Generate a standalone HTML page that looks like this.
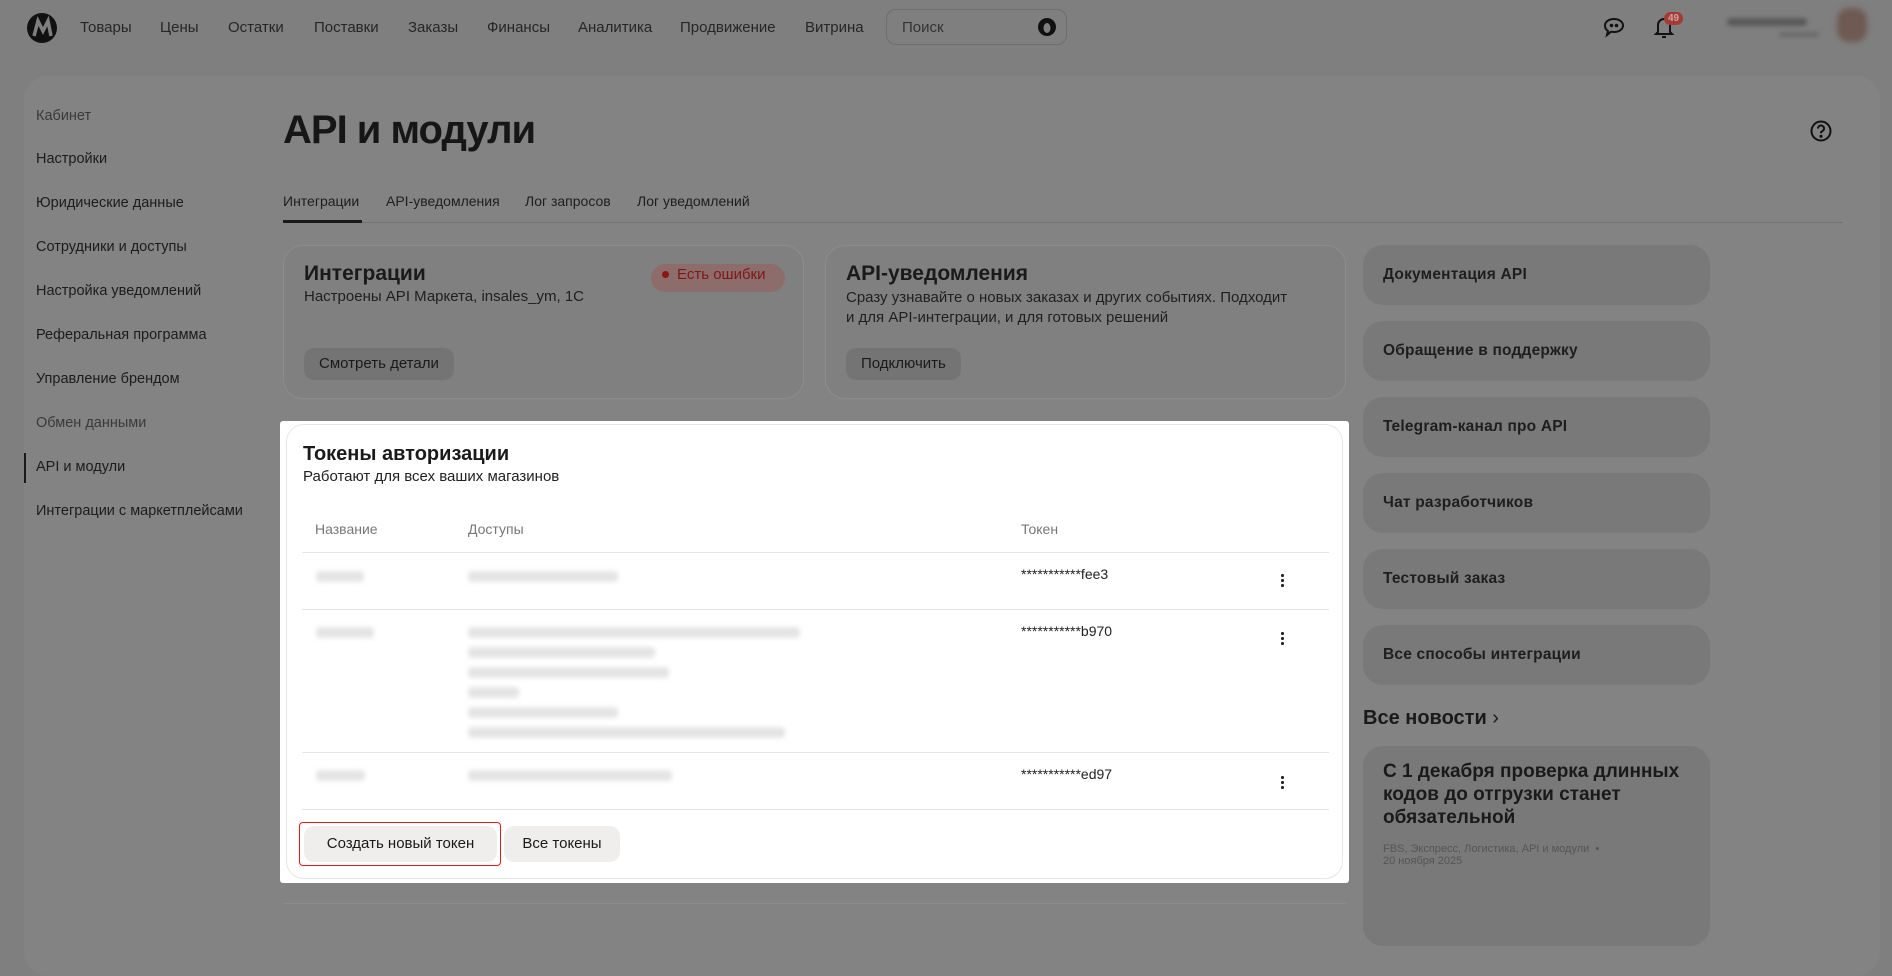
<!DOCTYPE html>
<html><head><meta charset="utf-8"><style>
*{box-sizing:border-box;margin:0;padding:0}
body{width:1892px;height:906px;overflow:hidden;background:#7f7f7f;font-family:"Liberation Sans",sans-serif;color:#1a1a1a;position:relative}
.a{position:absolute;white-space:nowrap}
.nav{font-size:15px;color:#262626;top:19px}
.side{font-size:14.5px;color:#1c1c1c;left:36px}
.card{position:absolute;border:1px solid #8c8c8c;border-radius:20px;background:#808080}
.btn{position:absolute;background:#747474;border-radius:10px;font-size:15px;color:#1a1a1a;padding:0 15px;line-height:32px}
.link{position:absolute;left:1363px;width:347px;height:60px;background:#797979;border-radius:20px;font-weight:bold;font-size:15.5px;color:#1e1e1e;padding-left:20px;line-height:60px;letter-spacing:.2px}
.tok{position:absolute;left:280px;top:421px;width:1069px;height:462px;background:#fff;border-radius:3px}
.tin{position:absolute;left:6px;top:3px;right:6px;bottom:4px;border:1px solid #e6e6e6;border-radius:18px}
.hl{position:absolute;left:22px;right:20px;height:1px;background:#e5e5e5}
.blur{position:absolute;height:11px;background:#e4e4e4;border-radius:4px;filter:blur(2.5px)}
.dots{position:absolute;left:1001px;width:3px}
.dots i{display:block;width:2.5px;height:2.5px;background:#222;border-radius:50%;margin-bottom:2.5px}
</style></head><body>
<svg class="a" style="left:26px;top:12px" width="32" height="32" viewBox="0 0 32 32"><circle cx="16" cy="16" r="15" fill="#111"/><path d="M8 24 L12 9 L17 19 L22 9 L25 24" stroke="#7f7f7f" stroke-width="3.5" fill="none"/></svg>
<div class="a nav" style="left:80px">Товары</div>
<div class="a nav" style="left:160px">Цены</div>
<div class="a nav" style="left:228px">Остатки</div>
<div class="a nav" style="left:314px">Поставки</div>
<div class="a nav" style="left:408px">Заказы</div>
<div class="a nav" style="left:487px">Финансы</div>
<div class="a nav" style="left:578px">Аналитика</div>
<div class="a nav" style="left:680px">Продвижение</div>
<div class="a nav" style="left:805px">Витрина</div>
<div class="a" style="left:886px;top:9px;width:181px;height:36px;border:1px solid #6e6e6e;border-radius:10px"></div>
<div class="a nav" style="left:902px;color:#333">Поиск</div>
<svg class="a" style="left:1037px;top:17px" width="20" height="20" viewBox="0 0 20 20"><circle cx="10" cy="10" r="9" fill="#111"/><ellipse cx="10" cy="11" rx="3.5" ry="5" fill="#7f7f7f"/></svg>
<svg class="a" style="left:1602px;top:15px" width="24" height="24" viewBox="0 0 24 24" fill="none" stroke="#111" stroke-width="2"><path d="M12 4c5 0 9 2.8 9 6.5S17 17 12 17c-1 0-2 0-3-.3L5 20l1-4C4 14.8 3 12.8 3 10.5 3 6.8 7 4 12 4z"/><circle cx="9.5" cy="10.5" r=".8" fill="#111"/><circle cx="14.5" cy="10.5" r=".8" fill="#111"/></svg>
<svg class="a" style="left:1652px;top:14px" width="24" height="26" viewBox="0 0 24 26" fill="none" stroke="#111" stroke-width="2"><path d="M6 18V11a6 6 0 0 1 12 0v7l2 2H4z"/><path d="M10 23h4"/></svg>
<div class="a" style="left:1664px;top:12px;background:#a33a35;color:#cfa6a4;font-size:10px;font-weight:bold;border-radius:8px;padding:1px 4px">49</div>
<div class="a" style="left:1727px;top:18px;width:80px;height:8px;background:#5a5a5a;border-radius:4px;filter:blur(2px)"></div>
<div class="a" style="left:1779px;top:32px;width:40px;height:5px;background:#6a6a6a;border-radius:4px;filter:blur(2px)"></div>
<div class="a" style="left:1837px;top:8px;width:30px;height:34px;background:#6e5a52;border-radius:12px;filter:blur(3px)"></div>

<div class="a" style="left:24px;top:76px;width:1856px;height:900px;background:#838383;border-radius:24px"></div>
<div class="a side" style="top:108px;color:#3a3a3a">Кабинет</div>
<div class="a side" style="top:151px">Настройки</div>
<div class="a side" style="top:195px">Юридические данные</div>
<div class="a side" style="top:239px">Сотрудники и доступы</div>
<div class="a side" style="top:283px">Настройка уведомлений</div>
<div class="a side" style="top:327px">Реферальная программа</div>
<div class="a side" style="top:371px">Управление брендом</div>
<div class="a side" style="top:415px;color:#3a3a3a">Обмен данными</div>
<div class="a" style="left:24px;top:453px;width:2px;height:30px;background:#1a1a1a"></div>
<div class="a side" style="top:459px">API и модули</div>
<div class="a side" style="top:503px">Интеграции с маркетплейсами</div>

<div class="a" style="left:283px;top:108px;font-size:40px;font-weight:bold;color:#161616;letter-spacing:-1px">API и модули</div>
<svg class="a" style="left:1810px;top:120px" width="22" height="22" viewBox="0 0 22 22" fill="none" stroke="#111" stroke-width="2"><circle cx="11" cy="11" r="9.5"/><path d="M8 8.5a3 3 0 1 1 4 2.8c-.8.4-1 1-1 2"/><circle cx="11" cy="16.3" r=".6" fill="#111"/></svg>

<div class="a" style="left:283px;top:193px;font-size:14px;color:#1e1e1e">Интеграции</div>
<div class="a" style="left:386px;top:193px;font-size:14px;color:#1e1e1e">API-уведомления</div>
<div class="a" style="left:525px;top:193px;font-size:14px;color:#1e1e1e">Лог запросов</div>
<div class="a" style="left:637px;top:193px;font-size:14px;color:#1e1e1e">Лог уведомлений</div>
<div class="a" style="left:283px;top:222px;width:1560px;height:1px;background:#737373"></div>
<div class="a" style="left:283px;top:220px;width:79px;height:3px;background:#1a1a1a"></div>

<div class="card" style="left:283px;top:245px;width:521px;height:154px"></div>
<div class="a" style="left:304px;top:262px;font-size:21px;font-weight:bold;color:#1a1a1a">Интеграции</div>
<div class="a" style="left:304px;top:288px;font-size:15px;color:#1f1f1f">Настроены API Маркета, insales_ym, 1C</div>
<div class="a" style="left:651px;top:264px;width:134px;height:28px;background:#8c6d6c;border-radius:14px"></div>
<div class="a" style="left:662px;top:271px;width:7px;height:7px;background:#8e1414;border-radius:50%"></div>
<div class="a" style="left:677px;top:266px;font-size:15px;color:#7f1717">Есть ошибки</div>
<div class="btn" style="left:304px;top:348px">Смотреть детали</div>

<div class="card" style="left:825px;top:245px;width:521px;height:154px"></div>
<div class="a" style="left:846px;top:262px;font-size:21px;font-weight:bold;color:#1a1a1a">API-уведомления</div>
<div class="a" style="left:846px;top:288px;font-size:15px;color:#1f1f1f;line-height:20px">Сразу узнавайте о новых заказах и других событиях. Подходит<br>и для API-интеграции, и для готовых решений</div>
<div class="btn" style="left:846px;top:348px">Подключить</div>

<div class="link" style="top:245px">Документация API</div>
<div class="link" style="top:321px">Обращение в поддержку</div>
<div class="link" style="top:397px">Telegram-канал про API</div>
<div class="link" style="top:473px">Чат разработчиков</div>
<div class="link" style="top:549px">Тестовый заказ</div>
<div class="link" style="top:625px">Все способы интеграции</div>
<div class="a" style="left:1363px;top:707px;font-size:20px;font-weight:bold;color:#1a1a1a">Все новости <span style="font-weight:normal">›</span></div>
<div class="a" style="left:1363px;top:746px;width:347px;height:200px;background:#797979;border-radius:20px"></div>
<div class="a" style="left:1383px;top:760px;font-size:19px;font-weight:bold;color:#1a1a1a;line-height:23px">С 1 декабря проверка длинных<br>кодов до отгрузки станет<br>обязательной</div>
<div class="a" style="left:1383px;top:843px;font-size:11px;color:#555;line-height:12px">FBS, Экспресс, Логистика, API и модули &nbsp;•<br>20 ноября 2025</div>
<div class="a" style="left:283px;top:903px;width:1063px;height:1px;background:#8c8c8c"></div>

<div class="tok"><div class="tin"></div>
<div class="a" style="left:23px;top:22px;font-size:20px;font-weight:bold;color:#1a1a1a">Токены авторизации</div>
<div class="a" style="left:23px;top:47px;font-size:15px;color:#222">Работают для всех ваших магазинов</div>
<div class="a" style="left:35px;top:100px;font-size:14px;color:#777">Название</div>
<div class="a" style="left:188px;top:100px;font-size:14px;color:#777">Доступы</div>
<div class="a" style="left:741px;top:100px;font-size:14px;color:#777">Токен</div>
<div class="hl" style="top:131px"></div>
<div class="blur" style="left:36px;top:150px;width:48px"></div>
<div class="blur" style="left:188px;top:150px;width:150px"></div>
<div class="a" style="left:741px;top:145px;font-size:14px;color:#222">***********fee3</div>
<div class="dots" style="top:153px"><i></i><i></i><i></i></div>
<div class="hl" style="top:188px"></div>
<div class="blur" style="left:36px;top:206px;width:58px"></div>
<div class="blur" style="left:188px;top:206px;width:332px"></div>
<div class="blur" style="left:188px;top:226px;width:187px"></div>
<div class="blur" style="left:188px;top:246px;width:201px"></div>
<div class="blur" style="left:188px;top:266px;width:51px"></div>
<div class="blur" style="left:188px;top:286px;width:150px"></div>
<div class="blur" style="left:188px;top:306px;width:317px"></div>
<div class="a" style="left:741px;top:202px;font-size:14px;color:#222">***********b970</div>
<div class="dots" style="top:211px"><i></i><i></i><i></i></div>
<div class="hl" style="top:331px"></div>
<div class="blur" style="left:36px;top:349px;width:49px"></div>
<div class="blur" style="left:188px;top:349px;width:204px"></div>
<div class="a" style="left:741px;top:345px;font-size:14px;color:#222">***********ed97</div>
<div class="dots" style="top:355px"><i></i><i></i><i></i></div>
<div class="hl" style="top:388px"></div>
<div class="a" style="left:19px;top:401px;width:202px;height:44px;border:1.5px solid #e21b1b;border-radius:4px"></div>
<div class="a" style="left:24px;top:405px;width:193px;height:36px;background:#efeeec;border-radius:10px;font-size:15px;line-height:36px;text-align:center;color:#1a1a1a">Создать новый токен</div>
<div class="a" style="left:224px;top:405px;width:116px;height:36px;background:#efeeec;border-radius:10px;font-size:15px;line-height:36px;text-align:center;color:#1a1a1a">Все токены</div>
</div>
</body></html>
